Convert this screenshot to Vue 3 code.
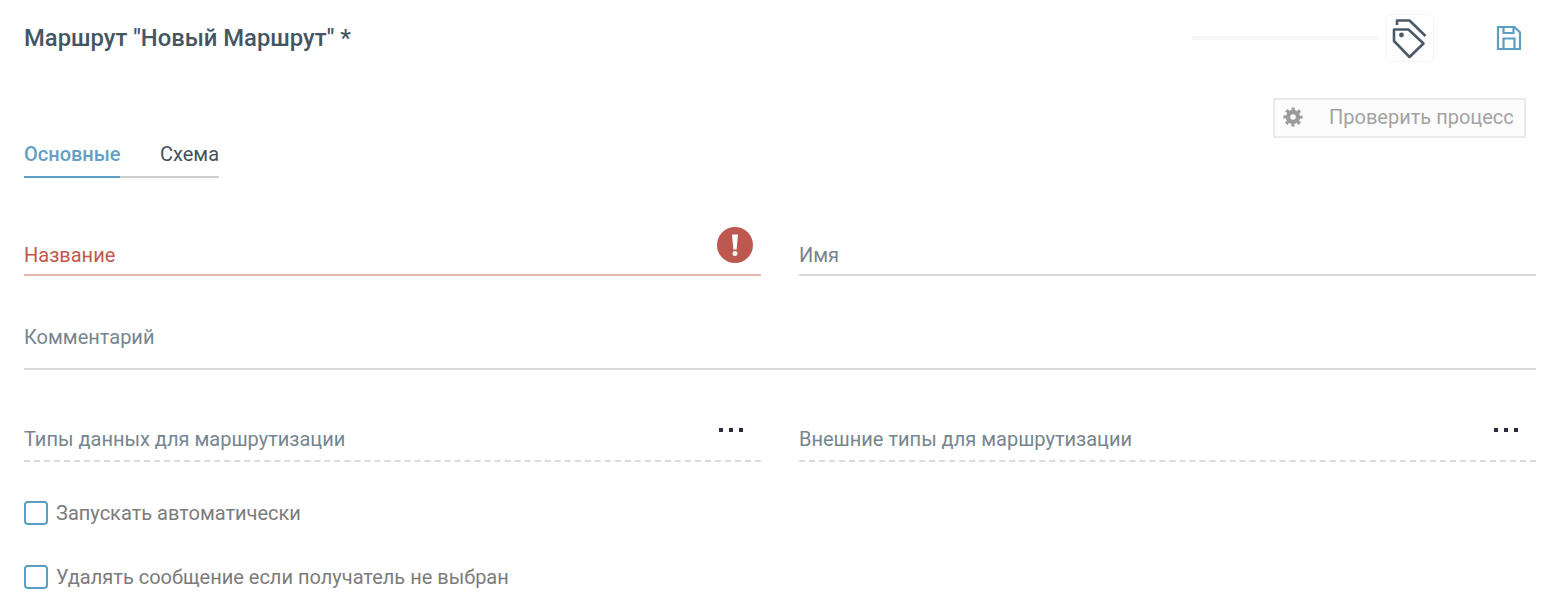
<template>
  <div class="page">
    <header class="top">
      <h1 class="title">Маршрут "Новый Маршрут" *</h1>
      <div class="top-actions">
        <div class="progress"></div>
        <div class="tag-box">
          <svg width="48" height="48" viewBox="0 0 48 48" fill="none" stroke="#4a5a68" stroke-width="2.6" stroke-linejoin="round">
            <path d="M8 15.5H22.5L37.5 29.5L23.5 43L8 27Z" />
            <path d="M11 11V6.5H23.5L39.5 22" />
            <circle cx="15.5" cy="21" r="2.4" fill="#4a5a68" stroke="none" />
          </svg>
        </div>
        <svg class="save" width="26" height="26" viewBox="0 0 26 26" fill="none" stroke="#5b9fc4" stroke-width="2.2">
          <path d="M2 2H18.5L24 7.5V24H2Z" />
          <path d="M7.5 2V8H17.5V2" />
          <path d="M7.5 24V13.5H18.5V24" />
        </svg>
      </div>
    </header>

    <div class="check-row">
      <button class="check-btn" type="button">
        <svg width="20" height="20" viewBox="0 0 20 20" fill="none">
          <circle cx="10" cy="10" r="5" stroke="#9b9b9b" stroke-width="4.4" />
          <circle cx="10" cy="10" r="8" stroke="#9b9b9b" stroke-width="3.2" stroke-dasharray="3.1 3.18" stroke-dashoffset="1.55" />
        </svg>
        <span>Проверить процесс</span>
      </button>
    </div>

    <nav class="tabs">
      <div v-for="tab in tabs" :key="tab" class="tab" :class="{ active: tab === activeTab }">{{ tab }}</div>
    </nav>

    <div class="row row-first">
      <div class="field error">
        <span>Название</span>
        <svg class="error-icon" width="36" height="36" viewBox="0 0 36 36">
          <circle cx="18" cy="18" r="18" fill="#bd5850" />
          <path d="M15 7.5H21L19.6 22.5H16.4Z" fill="#fff" />
          <circle cx="18" cy="26.6" r="2.5" fill="#fff" />
        </svg>
      </div>
      <div class="field"><span>Имя</span></div>
    </div>

    <div class="row">
      <div class="field wide"><span>Комментарий</span></div>
    </div>

    <div class="row">
      <div v-for="label in typeFields" :key="label" class="field dashed">
        <span>{{ label }}</span>
        <div class="dots"><i></i><i></i><i></i></div>
      </div>
    </div>

    <div class="options">
      <label v-for="option in options" :key="option" class="option">
        <span class="box"></span>
        <span>{{ option }}</span>
      </label>
    </div>
  </div>
</template>

<script setup>
const tabs = ['Основные', 'Схема']
const activeTab = 'Основные'

const typeFields = ['Типы данных для маршрутизации', 'Внешние типы для маршрутизации']
const options = ['Запускать автоматически', 'Удалять сообщение если получатель не выбран']
</script>

<style>
body {
  background: #fff;
}
</style>

<style scoped>
.page {
  box-sizing: border-box;
  width: 1556px;
  height: 604px;
  overflow: hidden;
  padding: 0 20px 0 24px;
  font-family: Roboto, "Liberation Sans", sans-serif;
  font-size: 20px;
  color: #76858f;
}

.top {
  display: flex;
  justify-content: space-between;
  align-items: flex-start;
  height: 98px;
}

.title {
  margin: 23px 0 0;
  font-size: 23.8px;
  line-height: 30px;
  font-weight: 500;
  color: #455663;
}

.top-actions {
  display: flex;
  align-items: center;
  margin-top: 14px;
}

.progress {
  width: 186px;
  height: 4px;
  margin-right: 8px;
  background: #f6f6f6;
  border-radius: 2px;
}

.tag-box {
  box-sizing: border-box;
  width: 48px;
  height: 48px;
  border: 1px solid #f5f5f5;
  border-radius: 5px;
}

.tag-box svg {
  display: block;
  margin: -1px;
}

.save {
  margin: 0 14px 0 62px;
  display: block;
}

.check-row {
  display: flex;
  justify-content: flex-end;
  height: 40px;
  padding-right: 10px;
}

.check-btn {
  box-sizing: border-box;
  display: flex;
  align-items: center;
  width: 253px;
  height: 40px;
  padding: 0 8px 2px;
  background: #fcfcfc;
  border: 2px solid #e9e9e9;
  font: inherit;
  color: #a3a3a3;
}

.check-btn span {
  margin-left: 26px;
  white-space: nowrap;
}

.tabs {
  display: inline-flex;
  height: 38px;
  border-bottom: 2px solid #cfcfcf;
  vertical-align: top;
}

.tab {
  padding-top: 1px;
  line-height: 30px;
  margin-bottom: -2px;
  color: #46525c;
  margin-left: 40px;
}

.tab:first-child {
  margin-left: 0;
}

.tab.active {
  box-sizing: border-box;
  width: 96px;
  white-space: nowrap;
  font-weight: 500;
  color: #659fc3;
  border-bottom: 2px solid #5b9fc4;
  height: 40px;
}

.row {
  display: flex;
  gap: 38px;
}

.row-first {
  margin-top: 54px;
}

.field {
  position: relative;
  box-sizing: border-box;
  flex: 0 0 737px;
  height: 44px;
  padding-top: 10px;
  line-height: 26px;
  border-bottom: 2px solid #d9d9d9;
}

.field.error {
  color: #bf584f;
  border-bottom-color: #e7b6b2;
}

.field.wide {
  flex: 1;
  height: 94px;
  padding-top: 48px;
}

.field.dashed {
  height: 92px;
  padding-top: 56px;
  border-bottom: 2px dashed #dcdcdc;
}

.error-icon {
  position: absolute;
  right: 8px;
  top: -5px;
}

.dots {
  position: absolute;
  right: 18px;
  top: 58px;
  display: flex;
  gap: 6px;
}

.dots i {
  width: 4px;
  height: 4px;
  background: #2c2c40;
}

.options {
  display: flex;
  flex-direction: column;
  gap: 40px;
  margin-top: 39px;
}

.option {
  display: flex;
  align-items: center;
  height: 24px;
  color: #7c7c7c;
}

.box {
  box-sizing: border-box;
  width: 24px;
  height: 24px;
  margin-right: 8px;
  border: 2px solid #5b9fc4;
  border-radius: 4px;
}
</style>
